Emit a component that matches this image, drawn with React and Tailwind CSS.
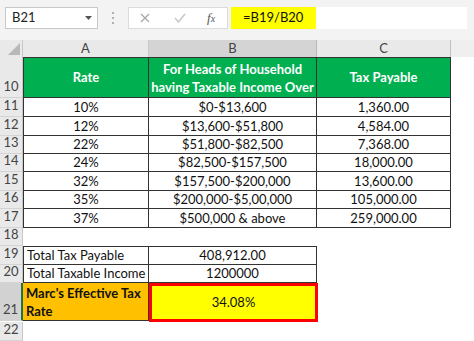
import React from "react";

const font = { fontFamily: "Lato, 'Open Sans', sans-serif" };

function RowHead({ n, h, sel }) {
  return (
    <div
      className={`w-[23px] shrink-0 flex items-end justify-center pb-[1px] text-[13px] text-[#444] border-b border-[#d4d4d4] ${sel ? "bg-[#d2d2d2] border-r-2 border-r-[#217346]" : "bg-[#e9e9e9] border-r border-r-[#c8c8c8]"}`}
      style={{ height: h }}
    >
      {n}
    </div>
  );
}

const dataRows = [
  ["11", 19, "10%", "$0-$13,600", "1,360.00"],
  ["12", 19, "12%", "$13,600-$51,800", "4,584.00"],
  ["13", 18, "22%", "$51,800-$82,500", "7,368.00"],
  ["14", 18, "24%", "$82,500-$157,500", "18,000.00"],
  ["15", 19, "32%", "$157,500-$200,000", "13,600.00"],
  ["16", 18, "35%", "$200,000-$5,00,000", "105,000.00"],
  ["17", 19, "37%", "$500,000 & above", "259,000.00"],
];

export default function App() {
  return (
    <div className="w-[474px] h-[341px] overflow-hidden bg-white text-[#111]" style={font}>
      {/* formula bar */}
      <div className="h-[40px] bg-[#f3f3f3] flex items-start pt-[7px]">
        <div className="ml-[5px] w-[93px] h-[22px] bg-white border border-[#c8c8c8] flex items-center pl-[6px] pr-[5px] text-[13px] text-[#222]">
          <span className="flex-1">B21</span>
          <svg width="7" height="4" viewBox="0 0 7 4"><path d="M0 0h7L3.5 4z" fill="#555" /></svg>
        </div>
        <div className="w-[30px] h-[22px] flex flex-col items-center justify-center gap-[3px]">
          <span className="w-[2px] h-[2px] bg-[#b0b0b0]" />
          <span className="w-[2px] h-[2px] bg-[#b0b0b0]" />
          <span className="w-[2px] h-[2px] bg-[#b0b0b0]" />
        </div>
        <div className="w-[100px] h-[22px] bg-white border border-[#dcdcdc] flex items-center">
          <svg className="ml-[11px]" width="10" height="10" viewBox="0 0 10 10"><path d="M1 1l8 8M9 1l-8 8" stroke="#a8a8a8" strokeWidth="1.3" /></svg>
          <svg className="ml-[24px]" width="12" height="10" viewBox="0 0 12 10"><path d="M1 5l3.5 4L11 1" stroke="#c4c4c4" strokeWidth="1.4" fill="none" /></svg>
          <span className="ml-[21px] text-[13px] italic text-[#555]" style={{ fontFamily: "'Liberation Serif', serif" }}>f<span className="text-[10px]">x</span></span>
        </div>
        <div className="ml-[3px] flex-1 mr-[7px] h-[22px] bg-white flex">
          <div className="w-[85px] h-[22px] bg-[#ffff00] flex items-center pl-[12px] text-[13px] text-[#111]">=B19/B20</div>
        </div>
      </div>

      {/* column headers */}
      <div className="h-[17px] flex text-[13px] text-[#444]">
        <div className="w-[23px] shrink-0 bg-[#e9e9e9] border-r border-[#c8c8c8] flex items-end justify-end p-[2px]">
          <svg width="12" height="12" viewBox="0 0 12 12"><path d="M12 0V12H0z" fill="#b8b8b8" /></svg>
        </div>
        <div className="w-[126px] shrink-0 bg-[#e9e9e9] border-r border-[#c8c8c8] flex items-center justify-center">A</div>
        <div className="w-[168px] shrink-0 bg-[#d4d4d4] border-r border-[#b8b8b8] flex items-center justify-center">B</div>
        <div className="w-[134px] shrink-0 bg-[#e9e9e9] border-r border-[#c0c0c0] flex items-center justify-center">C</div>
        <div className="flex-1 bg-[#efefef]" />
      </div>

      {/* row 10 */}
      <div className="flex">
        <RowHead n="10" h={41} />
        <div className="w-[126px] shrink-0 h-[41px] bg-[#00b050] border border-[#333] flex items-center justify-center text-[13px] font-bold text-white">Rate</div>
        <div className="w-[168px] shrink-0 h-[41px] bg-[#00b050] border-y border-r border-[#333] flex flex-col items-center justify-center text-[13px] font-bold text-white leading-[18px]">
          <span>For Heads of Household</span>
          <span>having Taxable Income Over</span>
        </div>
        <div className="w-[134px] shrink-0 h-[41px] bg-[#00b050] border-y border-r border-[#333] flex items-center justify-center text-[13px] font-bold text-white">Tax Payable</div>
      </div>

      {dataRows.map(([n, h, a, b, c]) => (
        <div className="flex text-[13px]" key={n}>
          <RowHead n={n} h={h} />
          <div className="w-[126px] shrink-0 border-l border-b border-r border-[#333] flex items-center justify-center pt-[1px]" style={{ height: h }}>{a}</div>
          <div className="w-[168px] shrink-0 border-b border-r border-[#333] flex items-center justify-center pt-[1px]" style={{ height: h }}>{b}</div>
          <div className="w-[134px] shrink-0 border-b border-r border-[#333] flex items-center justify-center pt-[1px]" style={{ height: h }}>{c}</div>
        </div>
      ))}

      {/* row 18 */}
      <div className="flex">
        <RowHead n="18" h={18} />
      </div>

      {/* rows 19-20 */}
      <div className="flex text-[13px]">
        <RowHead n="19" h={19} />
        <div className="w-[126px] shrink-0 h-[19px] border border-[#333] flex items-center pl-[3px] pt-[1px]">Total Tax Payable</div>
        <div className="w-[168px] shrink-0 h-[19px] border-y border-r border-[#333] flex items-center justify-center pt-[1px]">408,912.00</div>
      </div>
      <div className="flex text-[13px]">
        <RowHead n="20" h={18} />
        <div className="w-[126px] shrink-0 h-[18px] border-x border-b border-[#333] flex items-center pl-[3px] pt-[1px]">Total Taxable Income</div>
        <div className="w-[168px] shrink-0 h-[18px] border-r border-b border-[#333] flex items-center justify-center pt-[1px]">1200000</div>
      </div>

      {/* row 21 */}
      <div className="flex text-[13px]">
        <RowHead n="21" h={38} sel />
        <div className="w-[126px] shrink-0 h-[38px] bg-[#ffc000] border-r border-b border-[#333] flex flex-col justify-center pl-[3px] font-bold leading-[18px]">
          <span>Marc's Effective Tax</span>
          <span>Rate</span>
        </div>
        <div className="w-[169px] shrink-0 h-[39px] bg-[#ffff00] border-[3px] border-[#ff0000] flex items-center justify-center">34.08%</div>
      </div>

      {/* row 22 */}
      <div className="flex">
        <RowHead n="22" h={19} />
      </div>
    </div>
  );
}
